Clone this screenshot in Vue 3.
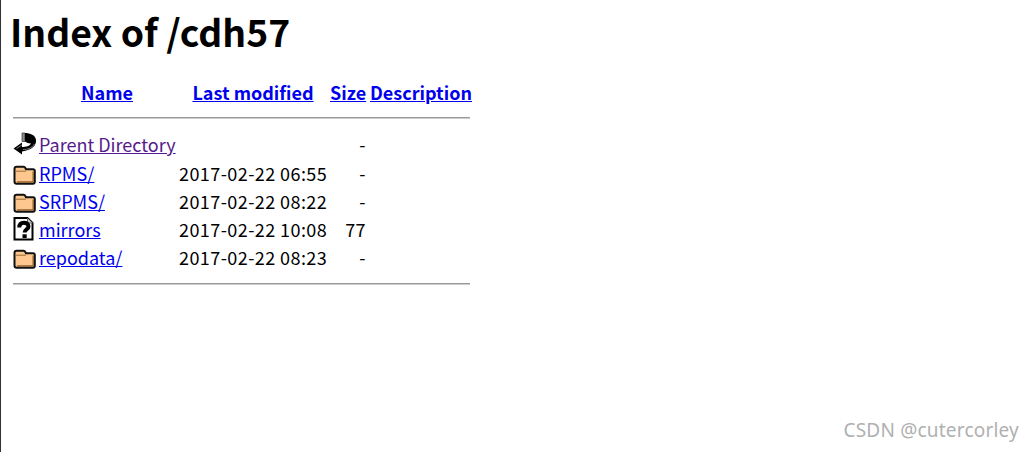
<template>
  <div class="page">
    <h1>Index of /cdh57</h1>
    <table>
      <thead>
        <tr>
          <th class="icon-col"></th>
          <th class="name-col"><a href="#">Name</a></th>
          <th class="date-col"><a href="#">Last modified</a></th>
          <th class="size-col"><a href="#">Size</a></th>
          <th class="desc-col"><a href="#">Description</a></th>
        </tr>
        <tr><th colspan="5" class="rule-cell"><hr /></th></tr>
      </thead>
      <tbody>
        <tr v-for="row in rows" :key="row.name">
          <td class="icon-cell">
            <svg v-if="row.icon === 'back'" width="24" height="24" viewBox="0 0 24 24">
              <path d="M9 2h3v8.500H9z" fill="#8c8c8c" stroke="#333" stroke-width=".7" />
              <path d="M12 2c5 0 10.500 2 11 7 .500 5.500-4 10-14 11.500V23.500L.500 17.500 9 11.500v4.500c4 0 8-1 9-3.500-2.500 0-4.500-1-6-2z" fill="#000" />
              <path d="M3.500 17.500 9 14M10 18.500c5 0 9-1.500 11.500-5.500" fill="none" stroke="#888" stroke-width=".9" />
            </svg>
            <svg v-else-if="row.icon === 'folder'" width="24" height="24" viewBox="0 0 24 24">
              <path d="M1.500 8c0-1.300 1-2.200 2.200-2.200h6.800c1 0 1.500 .500 2 1.500l.500 1h7c1 0 1.800 .800 1.800 1.800v10.700c0 1.200-.800 2-2 2H3.700c-1.200 0-2.200-1-2.200-2.200z" fill="#fdc78f" stroke="#111" stroke-width="2" stroke-linejoin="round" />
              <path d="M3 10.200h10" fill="none" stroke="#9a6a38" stroke-width="1" />
              <path d="M20.200 10.500v10.300M4 21h16" fill="none" stroke="#8f6030" stroke-width="1.400" />
            </svg>
            <svg v-else width="24" height="24" viewBox="0 0 24 24">
              <path d="M1.500 1h13l5 5v16.500h-18z" fill="#fff" stroke="#000" stroke-width="2" />
              <path d="M14.500 1v5h5" fill="#ccc" stroke="#666" stroke-width="1" />
              <path d="M6.300 10.500c0-3.500 2-4.800 4.500-4.800 2.700 0 4.700 1.400 4.700 3.700 0 2.800-3.800 3-3.800 6.100" fill="none" stroke="#000" stroke-width="4" />
              <path d="M9.500 17.300h4.200v3.700H9.500z" fill="#000" />
            </svg>
          </td>
          <td><a href="#" :class="{ visited: row.visited }">{{ row.name }}</a></td>
          <td class="date-cell">{{ row.date }}</td>
          <td class="size-cell">{{ row.size }}</td>
          <td></td>
        </tr>
        <tr><th colspan="5" class="rule-cell rule-end"><hr /></th></tr>
      </tbody>
    </table>
    <span class="watermark">CSDN @cutercorley</span>
  </div>
</template>

<script setup>
const rows = [
  { icon: 'back', name: 'Parent Directory', date: '', size: '-', visited: true },
  { icon: 'folder', name: 'RPMS/', date: '2017-02-22 06:55', size: '-' },
  { icon: 'folder', name: 'SRPMS/', date: '2017-02-22 08:22', size: '-' },
  { icon: 'unknown', name: 'mirrors', date: '2017-02-22 10:08', size: '77' },
  { icon: 'folder', name: 'repodata/', date: '2017-02-22 08:23', size: '-' },
];
</script>

<style>
html,
body {
  margin: 0;
  background: #fff;
}
</style>

<style scoped>
.page {
  position: relative;
  box-sizing: border-box;
  height: 452px;
  overflow: hidden;
  padding: 9px 0 0 10px;
  border-left: 1px solid #333;
  font-family: "Noto Sans CJK SC", "Noto Sans", sans-serif;
  font-size: 18px;
  color: #000;
  background: #fff;
}

h1 {
  margin: 0 0 24px -1px;
  font-size: 37.3px;
  line-height: 44px;
  font-weight: 700;
}

table {
  border-collapse: separate;
  border-spacing: 2px;
  table-layout: fixed;
  width: 461px;
}

th,
td {
  box-sizing: border-box;
  padding: 0;
  line-height: 26px;
  white-space: nowrap;
}

a {
  color: #0000ee;
}

a.visited {
  color: #551a8b;
}

hr {
  margin: 0;
  border: 0;
  border-top: 1px solid #999;
  border-bottom: 1px solid #ccc;
}

.icon-col {
  width: 24px;
}

.name-col {
  width: 138px;
  padding-right: 2px;
}

.date-col {
  width: 148px;
}

.size-col {
  width: 37px;
  padding-left: 1px;
}

.desc-col {
  text-align: left;
  padding-left: 2px;
}

.rule-cell {
  height: 22px;
}

.rule-end {
  height: 24px;
}

tbody tr:first-child td {
  height: 27px;
  vertical-align: top;
}

.icon-cell {
  height: 26px;
  vertical-align: middle;
}

.icon-cell svg {
  display: block;
  overflow: visible;
}

.date-cell,
.size-cell {
  letter-spacing: 0.42px;
}

.size-cell {
  text-align: right;
}

.watermark {
  position: absolute;
  right: 15px;
  bottom: 9px;
  font-family: "Noto Sans", sans-serif;
  font-size: 19px;
  letter-spacing: 0.2px;
  color: #b0b0b0;
}
</style>
